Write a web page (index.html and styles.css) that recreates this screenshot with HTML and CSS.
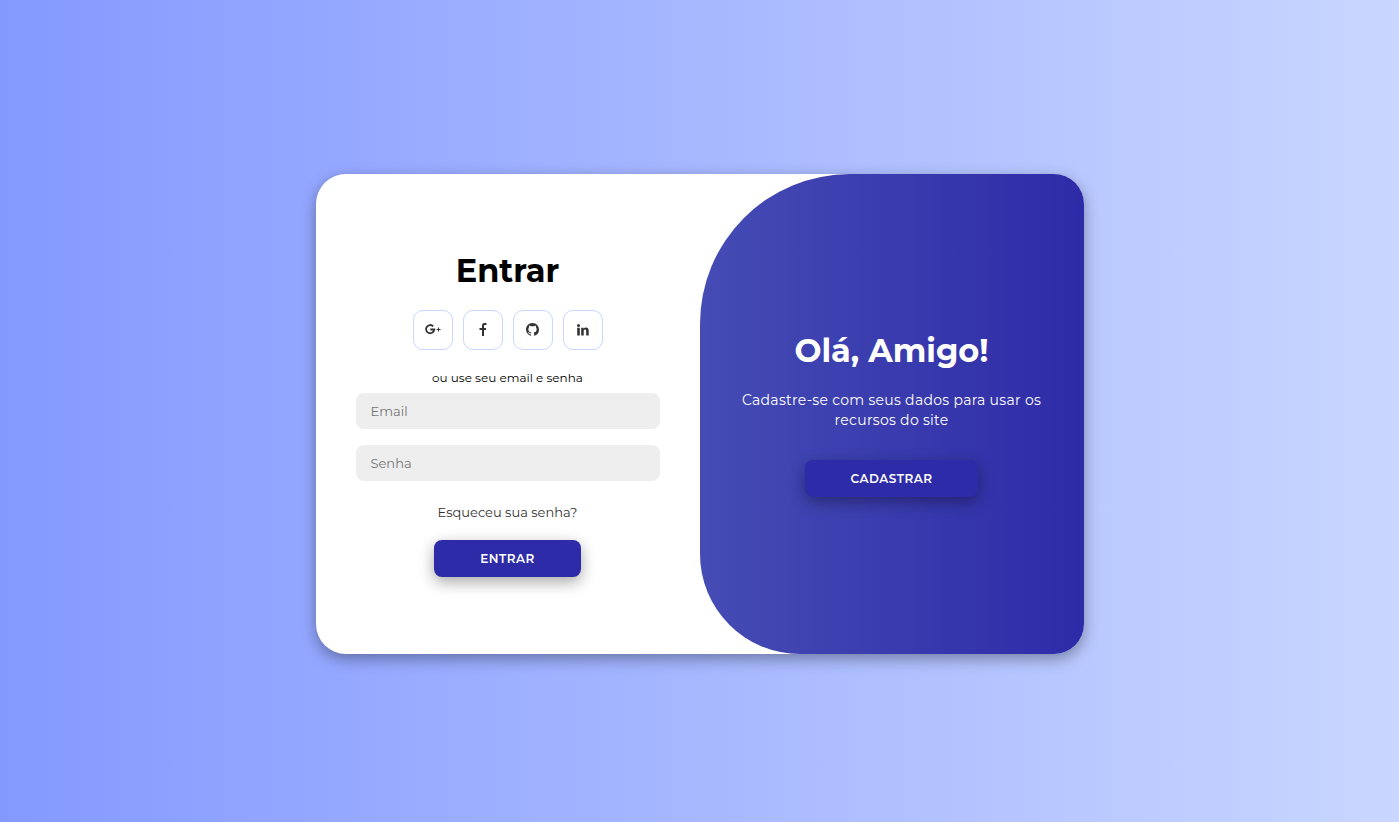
FILE: index.html
```html
<!DOCTYPE html>
<html lang="pt-BR">
<head>
  <meta charset="UTF-8">
  <meta name="viewport" content="width=device-width, initial-scale=1">
  <title>Entrar</title>
  <link rel="stylesheet" href="styles.css">
</head>
<body>
  <main class="card">
    <form class="sign-in">
      <h1 class="title">Entrar</h1>
      <nav class="social">
        <a class="social-link" href="#" aria-label="Google Plus">
          <svg width="16" height="11" viewBox="0 0 16 11" fill="none" stroke="currentColor">
            <path stroke-width="1.8" d="M8.2 2.3A4.1 4.1 0 1 0 9.3 5.5H5.3"/>
            <path stroke-width="1" d="M13.5 3.5v4M11.500 5.500h4"/>
          </svg>
        </a>
        <a class="social-link" href="#" aria-label="Facebook">
          <svg width="8" height="13" viewBox="0 0 8 13" fill="none" stroke="currentColor" stroke-width="2">
            <path d="M7.500 1H5.500Q4 1 4 2.700V13M.5 6H7"/>
          </svg>
        </a>
        <a class="social-link" href="#" aria-label="GitHub">
          <svg width="13" height="13" viewBox="0 0 16 16" fill="currentColor">
            <path d="M8 0C3.58 0 0 3.58 0 8c0 3.54 2.29 6.53 5.47 7.59.4.07.55-.17.55-.38 0-.19-.01-.82-.01-1.49-2.01.37-2.53-.49-2.69-.94-.09-.23-.48-.94-.82-1.13-.28-.15-.68-.52-.01-.53.63-.01 1.08.58 1.23.82.72 1.21 1.87.87 2.33.66.07-.52.28-.87.51-1.07-1.78-.2-3.64-.89-3.64-3.95 0-.87.31-1.59.82-2.15-.08-.2-.36-1.02.08-2.12 0 0 .67-.21 2.2.82.64-.18 1.32-.27 2-.27s1.36.09 2 .27c1.53-1.04 2.2-.82 2.2-.82.44 1.1.16 1.92.08 2.12.51.56.82 1.27.82 2.15 0 3.07-1.87 3.75-3.65 3.95.29.25.54.73.54 1.48 0 1.07-.01 1.93-.01 2.2 0 .21.15.46.55.38A8.01 8.01 0 0 0 16 8c0-4.42-3.58-8-8-8z"/>
          </svg>
        </a>
        <a class="social-link" href="#" aria-label="LinkedIn">
          <svg width="12" height="12" viewBox="0 0 12 12" fill="currentColor">
            <circle cx="1.5" cy="1.500" r="1.500"/>
            <path d="M.2 3.800h2.600V11.500H.2zM4.200 3.800h2.400v1C7.100 4 7.900 3.600 8.800 3.600c2.200 0 2.900 1.300 2.900 3.400v4.500H9.200V7.400c0-1-.2-1.800-1.200-1.800s-1.300.8-1.300 1.800v4.100H4.200z"/>
          </svg>
        </a>
      </nav>
      <span class="hint">ou use seu email e senha</span>
      <div class="fields">
        <input class="field" type="email" placeholder="Email" aria-label="Email">
        <input class="field" type="password" placeholder="Senha" aria-label="Senha">
      </div>
      <a class="forgot" href="#">Esqueceu sua senha?</a>
      <button class="button" type="button">Entrar</button>
    </form>
    <section class="welcome">
      <h1 class="title">Olá, Amigo!</h1>
      <p class="message">Cadastre-se com seus dados para usar os recursos do site</p>
      <button class="button" type="button">Cadastrar</button>
    </section>
  </main>
</body>
</html>
```
FILE: styles.css
```css
* {
  box-sizing: border-box;
  margin: 0;
  padding: 0;
  font-family: Montserrat, Inter, "Open Sans", sans-serif;
}

body {
  display: flex;
  align-items: center;
  justify-content: center;
  min-height: 100vh;
  padding-top: 6px;
  background: linear-gradient(to right, #8499ff, #c9d6ff);
}

.card {
  display: grid;
  grid-template-columns: 1fr 1fr;
  width: 768px;
  max-width: 100%;
  min-height: 480px;
  overflow: hidden;
  background: #fff;
  border-radius: 30px;
  box-shadow: 0 5px 15px rgba(0, 0, 0, 0.35);
}

.sign-in,
.welcome {
  display: flex;
  flex-direction: column;
  align-items: center;
  justify-content: center;
}

.sign-in {
  padding: 0 40px;
}

.welcome {
  padding: 0 30px;
  color: #fff;
  text-align: center;
  background: linear-gradient(to right, #454cb4, #2e2ba8);
  border-radius: 150px 0 0 100px;
}

.title {
  font-size: 32px;
  font-weight: 700;
  line-height: 39px;
}

.social {
  display: flex;
  gap: 10px;
  margin: 20px 0;
}

.social-link {
  display: flex;
  align-items: center;
  justify-content: center;
  width: 40px;
  height: 40px;
  padding-bottom: 1px;
  color: #333;
  border: 1px solid #c9d6ff;
  border-radius: 10px;
}

.hint {
  font-size: 12px;
  line-height: 15px;
}

.fields {
  display: grid;
  gap: 16px;
  width: 100%;
  margin: 8px 0 21px;
}

.field {
  width: 100%;
  height: 36px;
  padding: 0 15px;
  font-size: 13px;
  background: #eee;
  border: none;
  border-radius: 8px;
  outline: none;
}

.field::placeholder {
  color: #757575;
}

.forgot {
  margin-bottom: 18px;
  color: #333;
  font-size: 13px;
  line-height: 20px;
  text-decoration: none;
}

.message {
  margin: 20px 0 30px;
  font-size: 14px;
  line-height: 20px;
  letter-spacing: 0.3px;
}

.button {
  padding: 10px 46px;
  color: #fff;
  font-size: 12px;
  font-weight: 600;
  line-height: 17px;
  letter-spacing: 0.5px;
  text-transform: uppercase;
  background: #2e2ba8;
  border: none;
  border-radius: 8px;
  box-shadow: 0 5px 15px rgba(0, 0, 0, 0.35);
  cursor: pointer;
}
```
